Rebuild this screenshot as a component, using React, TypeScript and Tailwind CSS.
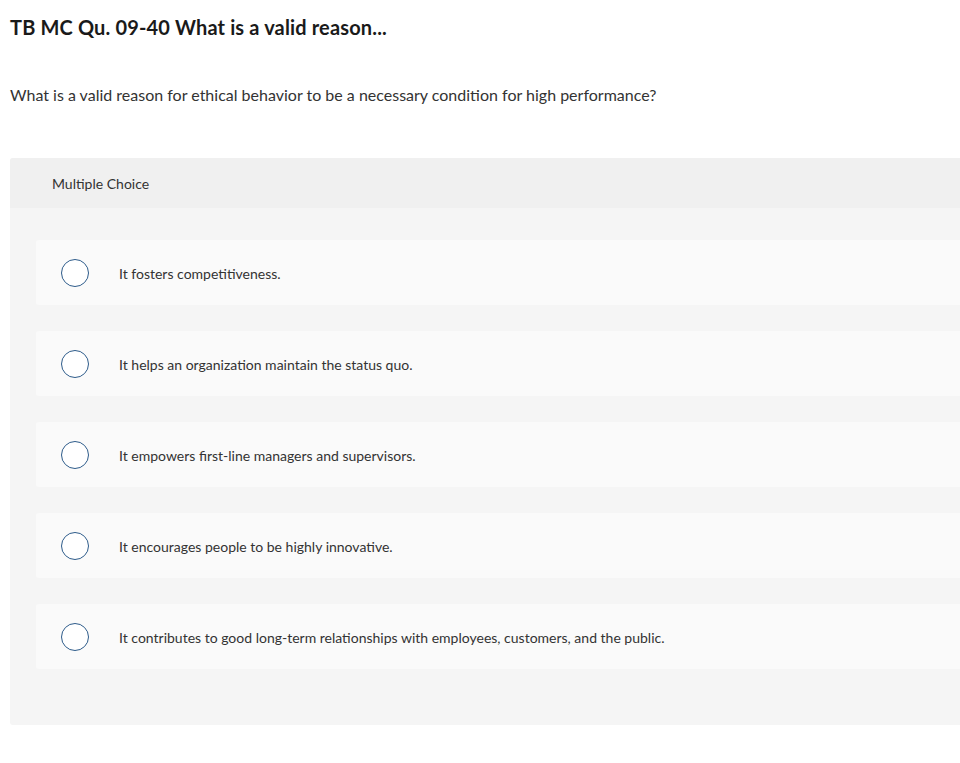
import React from 'react';

const choices = [
  'It fosters competitiveness.',
  'It helps an organization maintain the status quo.',
  'It empowers first-line managers and supervisors.',
  'It encourages people to be highly innovative.',
  'It contributes to good long-term relationships with employees, customers, and the public.',
];

const App = () => {
  return (
    <div className="min-h-screen bg-white text-[#333] overflow-hidden" style={{ fontFamily: 'Lato, "Open Sans", sans-serif' }}>
      {/* Heading */}
      <h1 className="pl-[10px] pt-[15px] text-[20px] leading-[24px] font-bold tracking-[0.15px] text-[#1a1a1a]">
        TB MC Qu. 09-40 What is a valid reason...
      </h1>

      <p className="pl-[10px] mt-[45px] text-[16px] leading-[22px]">
        What is a valid reason for ethical behavior to be a necessary condition for high performance?
      </p>

      {/* Choices panel */}
      <div className="ml-[10px] mt-[52px] rounded-l-[3px] bg-[#f5f5f5] overflow-hidden">
        <div className="h-[50px] bg-[#f0f0f0] pl-[42px] flex items-center text-[14px] text-[#333]">
          Multiple Choice
        </div>

        <div className="pl-[26px] pt-[32px] pb-[56px] flex flex-col gap-[26px]">
          {choices.map((choice, i) => (
            <div key={i} className="h-[65px] bg-[#fafafa] rounded-l-[3px] flex items-center">
              <span className="ml-[25px] mt-[1px] w-[28px] h-[28px] rounded-full border-[1.5px] border-[#2d5b8a] bg-white shrink-0" />
              <span className="ml-[30px] mt-[1px] text-[14px] text-[#333]">{choice}</span>
            </div>
          ))}
        </div>
      </div>
    </div>
  );
};

export default App;
